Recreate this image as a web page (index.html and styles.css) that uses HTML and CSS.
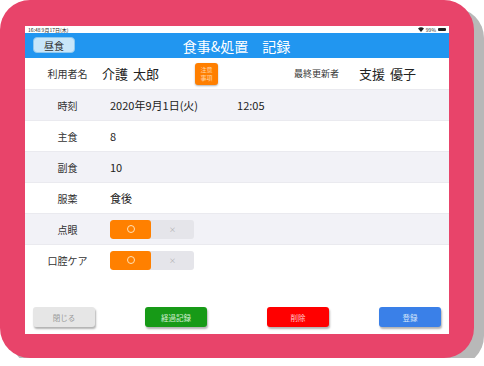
FILE: index.html
```html
<!DOCTYPE html>
<html lang="ja">
<head>
    <meta charset="UTF-8">
    <meta name="viewport" content="width=device-width, initial-scale=1.0">
    <title>食事&amp;処置 記録</title>
    <link rel="stylesheet" href="styles.css">
</head>
<body>
    <div class="device">
        <div class="screen">
            <div class="status-bar">
                <span>16:48 9月17日(木)</span>
                <span class="status-right">
                    <svg width="6" height="5" viewBox="0 0 6 5"><path d="M3 5 L0 1.6 A4.4 4.4 0 0 1 6 1.6 Z" fill="#222"/></svg>
                    <span>99%</span>
                    <span class="battery"></span>
                </span>
            </div>

            <header class="title-bar">
                <button class="meal-button">昼食</button>
                <h1>食事&amp;処置　記録</h1>
            </header>

            <div class="info-row">
                <span class="info-label">利用者名</span>
                <span class="info-name">介護 太郎</span>
                <span class="badge">注意<br>事項</span>
                <span class="updater-label">最終更新者</span>
                <span class="updater-name">支援 優子</span>
            </div>

            <div class="row shaded">
                <span class="row-label">時刻</span>
                <span class="row-value">2020年9月1日(火)</span>
                <span class="row-time">12:05</span>
            </div>
            <div class="row">
                <span class="row-label">主食</span>
                <span class="row-value">8</span>
            </div>
            <div class="row shaded">
                <span class="row-label">副食</span>
                <span class="row-value">10</span>
            </div>
            <div class="row">
                <span class="row-label">服薬</span>
                <span class="row-value">食後</span>
            </div>
            <div class="row shaded">
                <span class="row-label">点眼</span>
                <div class="segment">
                    <span class="seg-on"><i class="circle"></i></span>
                    <span class="seg-off">×</span>
                </div>
            </div>
            <div class="row">
                <span class="row-label">口腔ケア</span>
                <div class="segment">
                    <span class="seg-on"><i class="circle"></i></span>
                    <span class="seg-off">×</span>
                </div>
            </div>

            <div class="spacer"></div>

            <footer class="actions">
                <button class="action close-button">閉じる</button>
                <button class="action progress-button">経過記録</button>
                <button class="action delete-button">削除</button>
                <button class="action save-button">登録</button>
            </footer>
        </div>
    </div>
</body>
</html>
```

FILE: styles.css
```css
body {
    margin: 0;
    padding: 0;
    background-color: #ffffff;
    font-family: 'Noto Sans CJK JP', 'Noto Sans', sans-serif;
    color: #333333;
}

.device {
    width: 474px;
    height: 358px;
    box-sizing: border-box;
    padding: 26px 25px 24px 25px;
    background-color: #e8446a;
    border-radius: 30px;
    box-shadow: 10px 8px 0 #b8b8b8;
}

.screen {
    width: 424px;
    height: 308px;
    background-color: #ffffff;
    display: flex;
    flex-direction: column;
}

.status-bar {
    height: 7px;
    padding: 0 3px;
    display: flex;
    align-items: center;
    justify-content: space-between;
    font-size: 5px;
    line-height: 7px;
    color: #222222;
}

.status-right {
    display: flex;
    align-items: center;
    gap: 2px;
}

.battery {
    width: 8px;
    height: 3px;
    background-color: #222222;
    border-radius: 1px;
}

.title-bar {
    height: 25px;
    background-color: #2196f0;
    display: flex;
    align-items: center;
    position: relative;
}

.title-bar h1 {
    margin: 0;
    flex: 1;
    text-align: center;
    font-size: 14px;
    font-weight: normal;
    color: #ffffff;
    padding-right: 1px;
}

.meal-button {
    position: absolute;
    left: 8px;
    top: 4px;
    width: 42px;
    height: 16px;
    padding: 0;
    border: 1px solid #8ec8ee;
    border-radius: 4px;
    background-color: #c8e6f9;
    font-family: inherit;
    font-size: 10px;
    color: #333333;
}

.info-row {
    height: 31px;
    display: flex;
    align-items: center;
}

.info-label {
    width: 69px;
    padding-left: 8px;
    text-align: center;
    font-size: 10px;
}

.info-name {
    width: 93px;
    font-size: 13px;
    word-spacing: 2px;
    color: #222222;
}

.badge {
    width: 23px;
    height: 22px;
    border-radius: 3px;
    background-color: #ff7f00;
    box-shadow: 0 1px 2px rgba(0, 0, 0, 0.3);
    color: #ffd4a8;
    font-size: 6px;
    line-height: 7.5px;
    text-align: center;
    display: flex;
    align-items: center;
    justify-content: center;
}

.updater-label {
    margin-left: auto;
    font-size: 9px;
}

.updater-name {
    margin-left: 20px;
    margin-right: 33px;
    font-size: 13px;
    word-spacing: 2px;
    color: #222222;
}

.row {
    height: 31px;
    box-sizing: border-box;
    border-top: 1px solid #eaeaef;
    display: flex;
    align-items: center;
    background-color: #ffffff;
}

.row:last-of-type {
    border-bottom: 1px solid #eaeaef;
}

.row.shaded {
    background-color: #f2f2f7;
}

.row-label {
    width: 85px;
    text-align: center;
    font-size: 10px;
}

.row-value {
    font-size: 11px;
    color: #222222;
}

.row-time {
    margin-left: 39px;
    font-size: 11px;
    color: #222222;
}

.segment {
    display: flex;
    height: 19px;
    width: 84px;
    border-radius: 3px;
    background-color: #e5e5ea;
    overflow: hidden;
}

.seg-on {
    width: 41px;
    background-color: #ff8000;
    border-radius: 3px;
    display: flex;
    align-items: center;
    justify-content: center;
}

.circle {
    width: 6px;
    height: 6px;
    border: 1px solid #ffe2b8;
    border-radius: 50%;
}

.seg-off {
    flex: 1;
    display: flex;
    align-items: center;
    justify-content: center;
    font-size: 7px;
    color: #aaaaaa;
}

.spacer {
    flex: 1;
}

.actions {
    display: flex;
    padding: 0 8px 7px 8px;
}

.action {
    width: 62px;
    height: 20px;
    padding: 0;
    border: none;
    border-radius: 3px;
    font-family: inherit;
    font-size: 7.5px;
    box-shadow: 1px 2px 2px rgba(0, 0, 0, 0.3);
}

.close-button {
    background-color: #e6e6e6;
    color: #999999;
}

.progress-button {
    margin-left: 50px;
    background-color: #179a17;
    color: #d8f0d8;
}

.delete-button {
    margin-left: 60px;
    background-color: #ff0000;
    color: #ffc8c8;
}

.save-button {
    margin-left: auto;
    background-color: #3a80e8;
    color: #d6e6fa;
}
```
